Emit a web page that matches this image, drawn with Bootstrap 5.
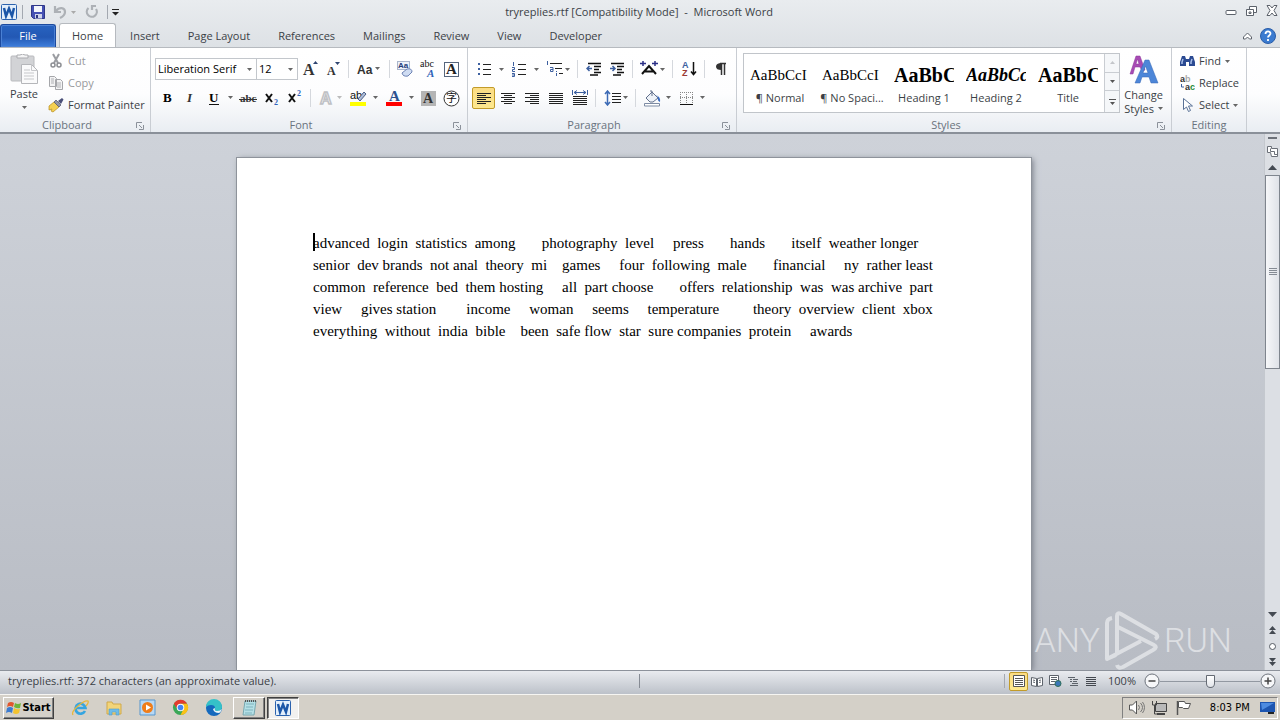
<!DOCTYPE html>
<html lang="en">
<head>
<meta charset="utf-8">
<meta name="viewport" content="width=device-width, initial-scale=1">
<title>tryreplies.rtf [Compatibility Mode] - Microsoft Word</title>
<link href="https://cdn.jsdelivr.net/npm/bootstrap@5.3.0/dist/css/bootstrap.min.css" rel="stylesheet">
<script src="https://cdn.jsdelivr.net/npm/bootstrap@5.3.0/dist/js/bootstrap.bundle.min.js"></script>
<style>
body{font:11px/14px "Open Sans","Noto Sans",sans-serif;color:#3b3f46;background:#c5c9d0;overflow:hidden}
button{border:0;background:none;padding:0;color:inherit;font:inherit;display:inline-flex;align-items:center;justify-content:center;white-space:nowrap}
svg{display:block;flex:none}
.top-bg{background:linear-gradient(#e9ecef,#dde1e5)}
.titlebar{height:24px}
.title-side{flex:1 1 0}
.win-btns{padding:3px 2px 6px 0}
.vsep{width:1px;height:14px;background:#a3a8b0}
.tabs{height:24px;border-bottom:1px solid #b6babf}
.tabs .tab{padding:0 14px;height:23px;color:#3b3f46;text-decoration:none;display:flex;align-items:center}
.tabs .tab-file{width:56px;padding:0;justify-content:center;color:#fff;border:1px solid #1c4a9e;border-bottom:0;border-radius:3px 3px 0 0;background:linear-gradient(#2763c0,#2358b4 55%,#3f7fdc);box-shadow:inset 0 0 0 1px #4a80d4;margin-right:3px}
.tabs .tab-on{height:24px;background:#fff;border:1px solid #b6babf;border-bottom:0;border-radius:3px 3px 0 0;padding:0 12px;color:#3b3f46}
.ribbon{height:86px;background:linear-gradient(#fff,#fdfdfe 55%,#e9edf2);border-bottom:2px solid #8a9099}
.rgroup{border-right:1px solid #c9cdd3;padding:2px 4px 0;display:flex;flex-direction:column}
.rbody{height:67px}
.rlabel{height:16px;line-height:18px;text-align:center;color:#6a737e;position:relative}
.rlabel svg{position:absolute;right:2px;bottom:2px}
.g-clip{width:151px}.g-font{width:317px}.g-para{width:269px}.g-style{width:435px}.g-edit{width:75px}
.trow{height:22px}
.tstack{padding-top:8px;gap:7px}
.tb{width:23px;height:22px}
.tsplit{width:35px;height:22px;justify-content:space-between;padding:0 3px}
.tdrop{width:31px;height:22px;gap:1px}
.tsep{width:9px;height:18px;background:linear-gradient(#d5d8dd,#d5d8dd) center/1px 100% no-repeat}
.tb-on{background:linear-gradient(#fbdc84,#fde88e);border:1px solid #c29b29;border-radius:2px}
.aligns{gap:1px}
.combo{appearance:none;border:1px solid #c3c7cc;border-radius:0;height:22px;padding:0 2px;font:inherit;color:#000;background:#fff url("data:image/svg+xml,%3Csvg xmlns='http://www.w3.org/2000/svg' width='5' height='3'%3E%3Cpath d='M0 0h5L2.5 3z' fill='%23666'/%3E%3C/svg%3E") no-repeat right 4px center}
.combo-name{width:102px}.combo-size{width:42px;margin-left:-1px}
.line-btn{height:22px;justify-content:flex-start;gap:4px}
.paste{gap:1px}
.dim{color:#98999c}
.gallery{width:377px;height:60px;border:1px solid #c1c5ca;background:#fff;margin:3px 0 0 2px}
.gal-item{width:72px;height:58px;flex-direction:column;gap:5px;padding-top:3px}
.gal-item .sample{width:60px;overflow:hidden;text-align:left;font:15px/22px "Liberation Serif",serif;color:#000}
.gal-item .sample-b{font-size:20px;font-weight:bold}
.gal-item .sample-i{font-size:18px;font-weight:bold;font-style:italic}
.gal-scroll{width:15px;border-left:1px solid #c9cdd2}
.gal-scroll button{border-bottom:1px solid #c9cdd2;background:#f5f7f9}
.gal-scroll button:last-child{border-bottom:0}
.workspace{background:linear-gradient(#ced2d9,#b8bcc4);min-height:0}
.sheet{width:794px;margin:24px 0 0 4px;background:#fff;box-shadow:0 0 0 1px #8e939b,2px 1px 6px #777c86;padding:74px 76px}
.sheet p{font:15px/22px "Liberation Serif",serif;color:#000;white-space:pre;margin:0}
.caret{display:inline-block;width:2px;height:18px;background:#000;margin-right:-2px;vertical-align:-3px}
.vscroll{width:16px;background:#dcdfe4;border-left:1px solid #c4c8ce}
.vscroll button{width:15px;height:16px;flex:none}
.vscroll .split{height:9px}
.vthumb{height:45%;border:1px solid #7f858e;background:linear-gradient(90deg,#f6f7f9,#dfe2e8);display:flex;align-items:center;justify-content:center}
.watermark{position:absolute;right:48px;bottom:0;color:#e6e8eb;opacity:.8;font:300 34px/60px Roboto,"Liberation Sans",sans-serif;gap:4px}
.status{height:24px;border-top:1px solid #8d929b;background:linear-gradient(#e9ebef,#bcc1c9);padding-bottom:3px}
.status-l{width:50%;padding-left:8px;border-right:1px solid #868b94;margin-right:-1px}
.vbtn{width:18px;height:20px}
.vbtn.tb-on{width:19px;height:19px}
.zoomer{width:100px;height:16px;appearance:none;background:linear-gradient(#9298a1,#9298a1) center/100% 1px no-repeat;margin:0}
.zoomer::-webkit-slider-thumb{appearance:none;width:9px;height:13px;background:linear-gradient(#fff,#e2e5ea);border:1px solid #646a73;border-radius:1px 1px 5px 5px}
.taskbar{height:26px;background:#d4d0c8;border-top:1px solid #f6f5f2;font:11px/14px "DejaVu Sans Condensed","Open Sans",sans-serif;color:#000;padding:0 2px 0 3px}
.raised{border:1px solid;border-color:#fff #404040 #404040 #fff;box-shadow:inset -1px -1px #808080;height:22px}
.pressed{border:1px solid;border-color:#404040 #fff #fff #404040;box-shadow:inset 1px 1px #808080;background:#f2f1ef;height:22px}
.start{width:51px;font-weight:bold;font-size:11px;gap:1px}
.task{width:32px;margin-right:2px}
.quick{gap:16px;padding:0 10px 0 17px}
.tray{width:156px;height:22px;border:1px solid;border-color:#808080 #fff #fff #808080;padding:0 1px 0 5px}
</style>
</head>
<body class="vh-100 d-flex flex-column">
<header class="top-bg">
  <div class="titlebar d-flex align-items-center">
    <div class="title-side d-flex align-items-center gap-1">
      <svg width="18" height="16" viewBox="0 0 18 16"><rect x="1.500" y=".5" width="15" height="15" rx="1" fill="#e3effb" stroke="#2b62ae"/><path d="M4 4l2 8 3-7.500 3 7.500 2-8" fill="none" stroke="#1c57a8" stroke-width="2.500"/></svg>
      <span class="vsep"></span>
      <button class="ms-1" aria-label="Save"><svg width="14" height="14" viewBox="0 0 14 14"><path d="M.5.5h13v13h-11l-2-2z" fill="#4550b4" stroke="#2f3788"/><path d="M3 1h8v6H3z" fill="#f3f5fb"/><path d="M4 9h7v4.500H4z" fill="#cfd3ea"/><path d="M5 10h2v3H5z" fill="#2c3580"/></svg></button>
      <button class="ms-1" aria-label="Undo"><svg width="24" height="14" viewBox="0 0 24 14"><path d="M2 1v6h6M3 6c3-4 9-4 9 1 0 3-3 5-5 6" fill="none" stroke="#adb1b6" stroke-width="2.200"/><path d="M18 6h5l-2.500 3z" fill="#aaa"/></svg></button>
      <button class="ms-1" aria-label="Repeat"><svg width="14" height="14" viewBox="0 0 14 14"><path d="M3.500 3a5 5 0 1 0 7.500 1M11 1H7v4" fill="none" stroke="#adb1b6" stroke-width="2.200"/></svg></button>
      <span class="vsep ms-1"></span>
      <button aria-label="Customize toolbar"><svg width="7" height="7" viewBox="0 0 7 7"><path d="M0 0h7v1H0zM0 3h7L3.500 6.500z" fill="#222"/></svg></button>
    </div>
    <div>tryreplies.rtf [Compatibility Mode] &nbsp;-&nbsp; Microsoft Word</div>
    <div class="title-side win-btns d-flex align-items-center justify-content-end gap-1">
      <button class="me-1" aria-label="Minimize"><svg width="12" height="12" viewBox="0 0 12 12"><rect x="1" y="5.500" width="10" height="4" rx="1" fill="#fff" stroke="#5c626b"/></svg></button>
      <button class="me-1" aria-label="Restore"><svg width="13" height="12" viewBox="0 0 13 12"><path d="M4.500 1.500h7v6h-7z" fill="#fff" stroke="#5c626b"/><path d="M1.500 4.500h7v6h-7z" fill="#fff" stroke="#5c626b"/><path d="M4 7h2v1.500H4z" fill="none" stroke="#5c626b"/></svg></button>
      <button aria-label="Close"><svg width="12" height="11" viewBox="0 0 12 11"><path d="M1 .5h3l2 2.500 2-2.500h3L8 5.500l3 5H8L6 8l-2 2.500H1l3-5z" fill="#fff" stroke="#5c626b"/></svg></button>
    </div>
  </div>
  <nav class="tabs d-flex align-items-end" aria-label="Ribbon tabs">
    <a href="#" class="tab tab-file">File</a><a href="#" class="tab tab-on">Home</a><a href="#" class="tab">Insert</a><a href="#" class="tab">Page Layout</a><a href="#" class="tab">References</a><a href="#" class="tab">Mailings</a><a href="#" class="tab">Review</a><a href="#" class="tab">View</a><a href="#" class="tab">Developer</a>
    <div class="ms-auto d-flex align-items-center align-self-center gap-2 pe-1">
      <button aria-label="Minimize ribbon"><svg width="9" height="8" viewBox="0 0 9 8"><path d="M.5 5l4-4 4 4v2h-2l-2-2-2 2h-2z" fill="#fff" stroke="#5c626b"/></svg></button>
      <button aria-label="Help"><svg width="16" height="16" viewBox="0 0 16 16"><circle cx="8" cy="8" r="7.500" fill="#3b7bd0" stroke="#2a5da8"/><path d="M5.500 6c0-3.500 5-3.300 5-.4C10.500 7.500 8 7.500 8 9.500M8 11v2" stroke="#fff" stroke-width="1.800" fill="none"/></svg></button>
    </div>
  </nav>
</header>

<section class="ribbon d-flex" aria-label="Home ribbon">
  <div class="rgroup g-clip">
    <div class="rbody d-flex">
      <button class="paste flex-column px-1 me-1 justify-content-start pt-1">
        <svg width="32" height="32" viewBox="0 0 32 32"><rect x="3" y="2" width="23" height="25" rx="1" fill="#d2d3d6" stroke="#b9babe"/><path d="M9 4V1h3q2.500-2 5 0h3v3z" fill="#f4f4f5" stroke="#aaabaf"/><path d="M13.500 10.500h10l6 6v13h-16z" fill="#fafafb" stroke="#b5b6ba"/><path d="M23.500 10.500v6h6M16 16h6M16 19h10M16 22h10M16 25h10" fill="none" stroke="#c6c7ca"/></svg>
        Paste
        <svg width="5" height="9" viewBox="0 0 5 9"><path d="M0 4h5L2.500 7z" fill="#666"/></svg>
      </button>
      <div class="d-flex flex-column align-items-start">
        <button class="line-btn dim"><svg width="16" height="16" viewBox="0 0 16 16"><path d="M5 1l5 9M11 1l-5 9" stroke="#9b9da2" stroke-width="2"/><circle cx="5" cy="12" r="2" fill="none" stroke="#8c8e93" stroke-width="1.500"/><circle cx="11" cy="12" r="2" fill="none" stroke="#8c8e93" stroke-width="1.500"/></svg>Cut</button>
        <button class="line-btn dim"><svg width="16" height="16" viewBox="0 0 16 16"><path d="M1.500 1.500h5l2 2v8h-7zM7.500 4.500h5l2 2v8h-7z" fill="#f3f3f4" stroke="#a5a6aa"/><path d="M3 4h3M3 6h3M3 8h3M9 8h4M9 10h4M9 12h4" stroke="#b0b1b5"/></svg>Copy</button>
        <button class="line-btn"><svg width="16" height="16" viewBox="0 0 16 16"><path d="M1 9l5-4 5 5-6 5-2-1 1-2-3 1z" fill="#f3cf52" stroke="#b78d1d" stroke-width=".7"/><path d="M6 5l2-2 5 5-2 2z" fill="#8f93a6" stroke="#4e5268" stroke-width=".7"/><path d="M10 4l4-3 1.500 1.500L13 7z" fill="#4a4f78"/></svg>Format Painter</button>
      </div>
    </div>
    <div class="rlabel pe-3">Clipboard<svg width="8" height="8" viewBox="0 0 8 8"><path d="M.5 6V.5H6M3 3l3 3M7.500 3v4.500H3" fill="none" stroke="#8b919a"/></svg></div>
  </div>

  <div class="rgroup g-font">
    <div class="rbody tstack d-flex flex-column">
      <div class="trow d-flex align-items-center justify-content-between">
        <div class="d-flex"><select class="combo combo-name" aria-label="Font"><option>Liberation Serif</option></select><select class="combo combo-size" aria-label="Font size"><option>12</option></select></div>
        <div class="d-flex align-items-center"><button class="tb" aria-label="Grow font"><svg width="18" height="18" viewBox="0 0 18 18"><text x="2" y="15" font-family="Liberation Serif" font-weight="bold" font-size="16" fill="#333">A</text><path d="M12 4h5l-2.500-3z" fill="#2d4470"/></svg></button>
        <button class="tb" aria-label="Shrink font"><svg width="18" height="18" viewBox="0 0 18 18"><text x="3" y="15" font-family="Liberation Serif" font-weight="bold" font-size="12" fill="#333">A</text><path d="M11 2h5l-2.500 3z" fill="#2d4470"/></svg></button></div>
        <span class="tsep"></span>
        <button class="tdrop" aria-label="Change case"><svg width="25" height="16" viewBox="0 0 25 16"><text x="1" y="13" font-family="Liberation Sans" font-weight="bold" font-size="12" fill="#333">Aa</text><path d="M19 6h5l-2.500 3z" fill="#666"/></svg></button>
        <span class="tsep"></span>
        <button class="tb" aria-label="Clear formatting"><svg width="18" height="18" viewBox="0 0 18 18"><rect x="1.500" y="1.500" width="12" height="8" fill="#eef2fa" stroke="#aab6cc"/><text x="2" y="8" font-family="Liberation Sans" font-weight="bold" font-size="8" fill="#223a78">Aa</text><path d="M6 13l5-4q5-1 5 3l-4 4q-5 1-6-3z" fill="#cfdcf2" stroke="#6d83b4"/></svg></button>
        <button class="tb" aria-label="Phonetic guide"><svg width="18" height="20" viewBox="0 0 18 20"><text x="1" y="8" font-family="Liberation Serif" font-size="10" fill="#111">abc</text><text x="8" y="18" font-family="Liberation Serif" font-style="italic" font-weight="bold" font-size="11" fill="#2e62b8">A</text></svg></button>
        <button class="tb" aria-label="Character border"><svg width="17" height="17" viewBox="0 0 17 17"><rect x="1.500" y="1.500" width="14" height="14" fill="#fff" stroke="#56657c"/><text x="3" y="13" font-family="Liberation Serif" font-weight="bold" font-size="15" fill="#222">A</text></svg></button>
      </div>
      <div class="trow d-flex align-items-center justify-content-between">
        <button class="tb" aria-label="Bold"><svg width="12" height="14" viewBox="0 0 12 14"><text x="2" y="11" font-family="Liberation Serif" font-weight="bold" font-size="13">B</text></svg></button>
        <button class="tb" aria-label="Italic"><svg width="12" height="14" viewBox="0 0 12 14"><text x="3" y="11" font-family="Liberation Serif" font-style="italic" font-weight="bold" font-size="13" fill="#333">I</text></svg></button>
        <button class="tsplit" aria-label="Underline"><svg width="29" height="16" viewBox="0 0 29 16"><text x="5" y="12" font-family="Liberation Serif" font-weight="bold" font-size="13">U</text><path d="M5 14.500h10" stroke="#111"/><path d="M24 6h5l-2.500 3z" fill="#666"/></svg></button>
        <button class="tb" aria-label="Strikethrough"><svg width="18" height="14" viewBox="0 0 18 14"><text x="1" y="11" font-family="Liberation Serif" font-weight="bold" font-size="11" fill="#333">abc</text><path d="M0 8.500h18" stroke="#333"/></svg></button>
        <button class="tb" aria-label="Subscript"><svg width="16" height="16" viewBox="0 0 16 16"><path d="M3 4l6 8M9 4l-6 8" stroke="#111" stroke-width="2"/><text x="11" y="15" font-family="Liberation Serif" font-weight="bold" font-size="8" fill="#2e62b8">2</text></svg></button>
        <button class="tb" aria-label="Superscript"><svg width="16" height="16" viewBox="0 0 16 16"><path d="M3 4l6 8M9 4l-6 8" stroke="#111" stroke-width="2"/><text x="11" y="6" font-family="Liberation Serif" font-weight="bold" font-size="8" fill="#2e62b8">2</text></svg></button>
        <span class="tsep"></span>
        <button class="tdrop" aria-label="Text effects"><svg width="25" height="18" viewBox="0 0 25 18"><text x="2" y="15" font-family="Liberation Sans" font-weight="bold" font-size="16" fill="#fff" stroke="#bfc1c5" stroke-width="1.500">A</text><path d="M19 7h5l-2.500 3z" fill="#bbb"/></svg></button>
        <button class="tsplit" aria-label="Highlight"><svg width="29" height="18" viewBox="0 0 29 18"><text x="1" y="10" font-family="Liberation Sans" font-size="11" fill="#111">ab</text><path d="M9 10l6-7 2 2-6 7z" fill="#aebdd8" stroke="#4d5f86"/><path d="M1 13h16v4H1z" fill="#ff0"/><path d="M24 7h5l-2.500 3z" fill="#666"/></svg></button>
        <button class="tsplit" aria-label="Font color"><svg width="29" height="18" viewBox="0 0 29 18"><text x="4" y="12" font-family="Liberation Serif" font-weight="bold" font-size="15" fill="#2d528f">A</text><path d="M1 13h16v4H1z" fill="#f00"/><path d="M24 7h5l-2.500 3z" fill="#666"/></svg></button>
        <button class="tb" aria-label="Character shading"><svg width="15" height="15" viewBox="0 0 15 15"><path d="M0 0h15v15H0z" fill="#b5b5b5"/><text x="2" y="12" font-family="Liberation Serif" font-weight="bold" font-size="14" fill="#333">A</text></svg></button>
        <button class="tb" aria-label="Enclose characters"><svg width="17" height="17" viewBox="0 0 17 17"><circle cx="8.500" cy="8.500" r="7.500" fill="#fff" stroke="#333"/><text x="3" y="12" font-family="Noto Sans CJK SC" font-size="11" fill="#111">字</text></svg></button>
      </div>
    </div>
    <div class="rlabel pe-3">Font<svg width="8" height="8" viewBox="0 0 8 8"><path d="M.5 6V.5H6M3 3l3 3M7.500 3v4.500H3" fill="none" stroke="#8b919a"/></svg></div>
  </div>

  <div class="rgroup g-para">
    <div class="rbody tstack d-flex flex-column">
      <div class="trow d-flex align-items-center">
        <button class="tsplit" aria-label="Bullets"><svg width="29" height="16" viewBox="0 0 29 16"><path d="M3 3h2M3 8h2M3 13h2" stroke="#3c5f9f" stroke-width="2"/><path d="M8 3.500h8M8 8.500h8M8 13.500h8" stroke="#222"/><path d="M24 7h5l-2.500 3z" fill="#666"/></svg></button>
        <button class="tsplit" aria-label="Numbering"><svg width="29" height="16" viewBox="0 0 29 16"><path d="M3.500 1v4M2 6.500h2.500v2h-2v2H5M2 12.500h2.500v3H2M2 14h2" stroke="#3c5f9f" fill="none"/><path d="M8 3.500h8M8 8.500h8M8 13.500h8" stroke="#222"/><path d="M24 7h5l-2.500 3z" fill="#666"/></svg></button>
        <button class="tdrop" aria-label="Multilevel list"><svg width="26" height="16" viewBox="0 0 26 16"><path d="M2.500 0v4M5 6.500h3v4H5.500v-2H8M11.500 12v3M11.500 10v1" stroke="#3c5f9f" fill="none"/><path d="M5 2.500h12M10 7.500h7M14 12.500h4" stroke="#222"/><path d="M20 7h5l-2.500 3z" fill="#666"/></svg></button>
        <span class="tsep"></span>
        <button class="tb" aria-label="Decrease indent"><svg width="16" height="14" viewBox="0 0 16 14"><path d="M2 1.500h13M8 4.500h7M8 7.500h5M8 10.500h7M4 13h8" stroke="#111" stroke-width="1.500"/><path d="M6 6.500H1M3.500 4L1 6.500 3.500 9" stroke="#3c5f9f" fill="none" stroke-width="1.500"/></svg></button>
        <button class="tb" aria-label="Increase indent"><svg width="16" height="14" viewBox="0 0 16 14"><path d="M2 1.500h13M8 4.500h7M8 7.500h5M8 10.500h7M4 13h8" stroke="#111" stroke-width="1.500"/><path d="M1 6.500h5M3.500 4L6 6.500 3.500 9" stroke="#3c5f9f" fill="none" stroke-width="1.500"/></svg></button>
        <span class="tsep"></span>
        <button class="tdrop" aria-label="Asian layout"><svg width="26" height="16" viewBox="0 0 26 16"><path d="M2 13l7-8 7 8M5 10.500h8" stroke="#111" stroke-width="2" fill="none"/><path d="M0 2.500h6M3 0v5M18 2.500h-6M15 0v5" stroke="#2b2f86" stroke-width="1.500" fill="none"/><path d="M20 7h5l-2.500 3z" fill="#666"/></svg></button>
        <span class="tsep"></span>
        <button class="tb" aria-label="Sort"><svg width="16" height="18" viewBox="0 0 16 18"><text x="1" y="8" font-family="Liberation Sans" font-weight="bold" font-size="9" fill="#3c5f9f">A</text><text x="1" y="16" font-family="Liberation Sans" font-weight="bold" font-size="9" fill="#9b3a34">Z</text><path d="M12.500 2v12M10 11.500l2.500 3 2.500-3" stroke="#111" fill="none" stroke-width="1.500"/></svg></button>
        <span class="tsep"></span>
        <button class="tb" aria-label="Show paragraph marks"><svg width="12" height="14" viewBox="0 0 12 14"><path d="M6.500 1v12M9.500 1v12M11 1.500H5" stroke="#333" stroke-width="1.500"/><path d="M6.500 1Q1 1 1 4.500T6.500 8z" fill="#333"/></svg></button>
      </div>
      <div class="trow d-flex align-items-center">
        <div class="aligns d-flex">
        <button class="tb tb-on" aria-label="Align left"><svg width="14" height="13" viewBox="0 0 14 13"><path d="M0 1.500h14M0 3.500h9M0 5.500h14M0 7.500h9M0 9.500h14M0 11.500h9" stroke="#222"/></svg></button>
        <button class="tb" aria-label="Center"><svg width="14" height="13" viewBox="0 0 14 13"><path d="M0 1.500h14M3 3.500h8M0 5.500h14M3 7.500h8M0 9.500h14M3 11.500h8" stroke="#222"/></svg></button>
        <button class="tb" aria-label="Align right"><svg width="14" height="13" viewBox="0 0 14 13"><path d="M0 1.500h14M5 3.500h9M0 5.500h14M5 7.500h9M0 9.500h14M5 11.500h9" stroke="#222"/></svg></button>
        <button class="tb" aria-label="Justify"><svg width="14" height="13" viewBox="0 0 14 13"><path d="M0 1.500h14M0 3.500h14M0 5.500h14M0 7.500h14M0 9.500h14M0 11.500h14" stroke="#222"/></svg></button>
        <button class="tb" aria-label="Distribute"><svg width="16" height="16" viewBox="0 0 16 16"><path d="M.5 0v5M15.500 0v5M2 2.500h12M5 .5l-3 2 3 2M11 .5l3 2-3 2" stroke="#3c5f9f" fill="none"/><path d="M1 6.500h14M1 8.500h14M1 10.500h14M1 12.500h14M1 14.500h14" stroke="#222"/></svg></button>
        </div>
        <span class="tsep"></span>
        <button class="tdrop" aria-label="Line spacing"><svg width="26" height="16" viewBox="0 0 26 16"><path d="M4.500 1v14M2 4l2.500-3L7 4M2 12l2.500 3L7 12" stroke="#3c6ab5" fill="none" stroke-width="1.500"/><path d="M9 3.500h9M9 6.500h9M9 9.500h9M9 12.500h9" stroke="#222"/><path d="M20 6h5l-2.500 3z" fill="#666"/></svg></button>
        <span class="tsep"></span>
        <button class="tsplit" aria-label="Shading"><svg width="29" height="17" viewBox="0 0 29 17"><path d="M3 8l6-6 6 6-5 4H7z" fill="#eef2f8" stroke="#62708c"/><path d="M9 6V1H7" stroke="#62708c" fill="none"/><path d="M13 5q5 2 4 7-3-1-2-5z" fill="#3a6cc4"/><path d="M1.500 13.500h15v2.500h-15z" fill="#fff" stroke="#7d8ba3"/><path d="M23 6h5l-2.500 3z" fill="#666"/></svg></button>
        <button class="tsplit" aria-label="Borders"><svg width="29" height="16" viewBox="0 0 29 16"><path d="M2.500 2v11M8.500 2v11M14.500 2v11M2 2.500h13M2 7.500h13" stroke="#888" stroke-dasharray="1 1"/><path d="M2 14.500h13" stroke="#111"/><path d="M22 6h5l-2.500 3z" fill="#666"/></svg></button>
      </div>
    </div>
    <div class="rlabel pe-3">Paragraph<svg width="8" height="8" viewBox="0 0 8 8"><path d="M.5 6V.5H6M3 3l3 3M7.500 3v4.500H3" fill="none" stroke="#8b919a"/></svg></div>
  </div>

  <div class="rgroup g-style">
    <div class="rbody d-flex justify-content-between">
      <div class="gallery d-flex justify-content-between">
        <div class="d-flex">
        <button class="gal-item"><span class="sample">AaBbCcI</span>¶ Normal</button><button class="gal-item"><span class="sample">AaBbCcI</span>¶ No Spaci...</button><button class="gal-item"><span class="sample sample-b">AaBbC</span>Heading 1</button><button class="gal-item"><span class="sample sample-i">AaBbCc</span>Heading 2</button><button class="gal-item"><span class="sample sample-b">AaBbC</span>Title</button>
        </div>
        <div class="gal-scroll d-flex flex-column">
          <button class="flex-fill" aria-label="Previous styles"><svg width="5" height="3" viewBox="0 0 5 3"><path d="M0 3h5L2.500 0z" fill="#c4c6ca"/></svg></button>
          <button class="flex-fill" aria-label="Next styles"><svg width="5" height="3" viewBox="0 0 5 3"><path d="M0 0h5L2.500 3z" fill="#555"/></svg></button>
          <button class="flex-fill" aria-label="More styles"><svg width="7" height="6" viewBox="0 0 7 6"><path d="M0 0h7v1H0zM1 3h5L3.500 6z" fill="#555"/></svg></button>
        </div>
      </div>
      <button class="flex-column justify-content-start pt-1 px-1">
        <svg width="32" height="34" viewBox="0 0 32 34"><path d="M2 20L8 2h4l5 14-3 1-2-4H7l-2 7zM8 10h3L9.500 5z" fill="#a74bb4" stroke="#8a3598" stroke-width=".5"/><path d="M7 29L17 6h4l9 23h-7l-2-6h-7l-2 6zM15 19h5l-2.500-7z" fill="#4d86d8" stroke="#3467b5" stroke-width=".5"/></svg>
        <span class="lh-sm">Change<br>Styles<svg class="d-inline ms-1" width="5" height="5" viewBox="0 0 5 5"><path d="M0 0h5L2.500 3z" fill="#666"/></svg></span>
      </button>
    </div>
    <div class="rlabel pe-3">Styles<svg width="8" height="8" viewBox="0 0 8 8"><path d="M.5 6V.5H6M3 3l3 3M7.500 3v4.500H3" fill="none" stroke="#8b919a"/></svg></div>
  </div>

  <div class="rgroup g-edit">
    <div class="rbody d-flex flex-column align-items-start ps-1">
      <button class="line-btn"><svg width="15" height="14" viewBox="0 0 15 14"><path d="M0 12V8l2-6h3l1 3h3l1-3h3l2 6v4H9V8H6v4z" fill="#2b4a92"/><path d="M2 10V8l1-3M11 10V8l1-3" stroke="#a9bfe8" fill="none" stroke-width="1.500"/></svg>Find<svg width="5" height="3" viewBox="0 0 5 3"><path d="M0 0h5L2.500 3z" fill="#666"/></svg></button>
      <button class="line-btn"><svg width="15" height="16" viewBox="0 0 15 16"><text x="0" y="7" font-family="Liberation Sans" font-weight="bold" font-size="9" fill="#333">a<tspan fill="#aaa">b</tspan></text><text x="5" y="15" font-family="Liberation Sans" font-weight="bold" font-size="9" fill="#333">a<tspan fill="#1f8a36">c</tspan></text><path d="M1.500 9v3H4" stroke="#3c5f9f" fill="none"/></svg>Replace</button>
      <button class="line-btn"><svg width="15" height="16" viewBox="0 0 15 16"><path d="M3.500 1.500v11l3-2.500 2 4.500 2-1-2-4.500h4z" fill="#fff" stroke="#5a7297"/></svg>Select<svg width="5" height="3" viewBox="0 0 5 3"><path d="M0 0h5L2.500 3z" fill="#666"/></svg></button>
    </div>
    <div class="rlabel">Editing</div>
  </div>
</section>

<main class="workspace flex-grow-1 d-flex position-relative">
  <div class="flex-grow-1 d-flex justify-content-center overflow-hidden">
    <article class="sheet"><p><span class="caret"></span>advanced  login  statistics  among       photography  level     press       hands       itself  weather longer
senior  dev brands  not anal  theory  mi    games     four  following  male       financial     ny  rather least
common  reference  bed  them hosting     all  part choose       offers  relationship  was  was archive  part
view     gives station        income     woman     seems     temperature         theory  overview  client  xbox
everything  without  india  bible    been  safe flow  star  sure companies  protein     awards</p></article>
  </div>
  <div class="watermark d-flex align-items-center">ANY<svg width="56" height="60" viewBox="0 0 56 60"><path d="M8 8Q3 9 3 13v36l9-4M13 44V6q0-4 4-2l35 20q3 3-1 5M14 17l36 18q4 2-1 5L19 57q-5 2-6-2M3 49L37 31" fill="none" stroke="#e6e8eb" stroke-width="4" stroke-linejoin="round"/></svg>RUN</div>
  <div class="vscroll d-flex flex-column align-items-center">
    <button class="split" aria-label="Split"><svg width="9" height="3" viewBox="0 0 9 3"><path d="M0 0h9v2H0z" fill="#6b7078"/></svg></button>
    <button aria-label="Ruler"><svg width="13" height="13" viewBox="0 0 13 13"><path d="M1.500 1.500h4v2h6v8h-6l-1-4h-3z" fill="#fff" stroke="#6b7078"/><path d="M4.500 3.500v3h4v3h3" stroke="#6b7078" fill="none"/></svg></button>
    <button aria-label="Scroll up"><svg width="9" height="5" viewBox="0 0 9 5"><path d="M0 5h9L4.500 0z" fill="#444a52"/></svg></button>
    <div class="flex-grow-1 w-100"><div class="vthumb"><svg width="8" height="8" viewBox="0 0 8 8"><path d="M0 .5h8M0 2.500h8M0 4.500h8M0 6.500h8" stroke="#858b94"/></svg></div></div>
    <button aria-label="Scroll down"><svg width="9" height="5" viewBox="0 0 9 5"><path d="M0 0h9L4.500 5z" fill="#444a52"/></svg></button>
    <button aria-label="Previous page"><svg width="7" height="8" viewBox="0 0 7 8"><path d="M0 4h7L3.500 0zM0 8h7L3.500 4z" fill="#444a52"/></svg></button>
    <button aria-label="Browse object"><svg width="7" height="7" viewBox="0 0 7 7"><circle cx="3.500" cy="3.500" r="3" fill="#fff" stroke="#555b63"/></svg></button>
    <button aria-label="Next page"><svg width="7" height="8" viewBox="0 0 7 8"><path d="M0 0h7L3.500 4zM0 4h7L3.500 8z" fill="#444a52"/></svg></button>
  </div>
</main>

<div class="status d-flex align-items-center">
  <div class="status-l">tryreplies.rtf: 372 characters (an approximate value).</div>
  <div class="ms-auto d-flex align-items-center">
    <span class="vsep me-1"></span>
    <button class="vbtn tb-on" aria-label="Print layout"><svg width="12" height="12" viewBox="0 0 12 12"><path d="M.5.5h11v11H.5z" fill="#fff" stroke="#555"/><path d="M2 3.500h8M2 5.500h8M2 7.500h8M2 9.500h8" stroke="#555"/></svg></button>
    <button class="vbtn" aria-label="Full screen reading"><svg width="12" height="11" viewBox="0 0 12 11"><path d="M.5 1.500l5 1v8l-5-1zM11.500 1.500l-5 1v8l5-1z" fill="#fff" stroke="#5d636b"/><path d="M2 4l2 .5M2 6l2 .5M10 4l-2 .5M10 6l-2 .5" stroke="#5d636b"/></svg></button>
    <button class="vbtn" aria-label="Web layout"><svg width="13" height="12" viewBox="0 0 13 12"><path d="M.5.5h9v9h-9z" fill="#fff" stroke="#5d636b"/><path d="M2 2.500h6M2 4.500h6M2 6.500h4" stroke="#5d636b"/><circle cx="9" cy="8.500" r="3" fill="#3b76b8" stroke="#2d6d55"/></svg></button>
    <button class="vbtn" aria-label="Outline"><svg width="10" height="9" viewBox="0 0 10 9"><path d="M0 .5h7M2 2.500h2M5 2.500h5M2 4.500h2M5 4.500h4M4 6.500h6M2 8.500h8" stroke="#5d636b"/></svg></button>
    <button class="vbtn" aria-label="Draft"><svg width="10" height="9" viewBox="0 0 10 9"><path d="M0 .5h10M0 2.500h10M0 4.500h10M0 6.500h10M0 8.500h10" stroke="#44484f"/></svg></button>
    <button class="ps-2 pe-2 me-0">100%</button>
    <button aria-label="Zoom out"><svg width="16" height="16" viewBox="0 0 16 16"><circle cx="8" cy="8" r="7" fill="#f6f7f9" stroke="#6e747d"/><path d="M4.500 8h7" stroke="#444" stroke-width="1.500"/></svg></button>
    <input class="zoomer" type="range" min="0" max="100" value="50" aria-label="Zoom">
    <button class="me-1" aria-label="Zoom in"><svg width="16" height="16" viewBox="0 0 16 16"><circle cx="8" cy="8" r="7" fill="#f6f7f9" stroke="#6e747d"/><path d="M4.500 8h7M8 4.500v7" stroke="#444" stroke-width="1.500"/></svg></button>
  </div>
</div>

<footer class="taskbar d-flex align-items-center">
  <button class="raised start"><svg width="15" height="14" viewBox="0 0 15 14"><path d="M2 2q3-2 6 0L7 6Q4 4 1 6z" fill="#e2562d"/><path d="M9 2q3 2 6 0l-1 5q-3 1-6-1z" fill="#6fb53a"/><path d="M1 7q3-2 6 0l-1 5Q3 10 0 12z" fill="#3b7bd0"/><path d="M8 7q3 2 6 1l-1 4q-3 2-6 0z" fill="#f3c32f"/></svg>Start</button>
  <div class="quick d-flex align-items-center">
    <button aria-label="Internet Explorer"><svg width="18" height="18" viewBox="0 0 18 18"><path d="M14 12a5 5 0 1 1 .5-3H5" fill="none" stroke="#36a5e0" stroke-width="2.600"/><path d="M2 16Q0 13 7 7t10-5q1 2-2 5" fill="none" stroke="#e8b73a" stroke-width="1.300"/></svg></button>
    <button aria-label="Explorer"><svg width="18" height="18" viewBox="0 0 18 18"><path d="M2 3h5l1 2h8v10H2z" fill="#f2d479" stroke="#d0a94a"/><path d="M4 16v-6h10v6h-3v-3H7v3z" fill="#6fbce8" stroke="#4d9bcb" stroke-width=".6"/></svg></button>
    <button aria-label="Media Player"><svg width="17" height="17" viewBox="0 0 17 17"><path d="M1 1h15v15H1z" fill="#b8d8f4" stroke="#5697cf"/><circle cx="8.500" cy="8.500" r="5.500" fill="#ef7d1a"/><path d="M7 5.500v6l5-3z" fill="#fff"/></svg></button>
    <button aria-label="Chrome"><svg width="17" height="17" viewBox="0 0 18 18"><circle cx="9" cy="9" r="8" fill="#3aa757"/><path d="M2 5a8 8 0 0 1 14 0H9L6 11z" fill="#e33b2e"/><path d="M16 5a8 8 0 0 1-7 12l4-8-3-4z" fill="#fbc116"/><circle cx="9" cy="9" r="4" fill="#fff"/><circle cx="9" cy="9" r="3" fill="#4285f4"/></svg></button>
    <button aria-label="Edge"><svg width="18" height="18" viewBox="0 0 18 18"><circle cx="9" cy="9" r="8" fill="#1469bd"/><path d="M1 8a8 8 0 0 1 16 0q0 4-5 4-3 0-2-3 0-3-4-3-3 0-5 2z" fill="#35c1c8"/><path d="M10 9q-1 3 2 3 3 0 5-2-1 3-3 4-5 0-6-4z" fill="#e9f6fa"/></svg></button>
  </div>
  <button class="raised task" aria-label="Notepad"><svg width="17" height="18" viewBox="0 0 17 18"><path d="M4 2h11l-2 14H2z" fill="#b5e0e6" stroke="#78a8b0"/><path d="M5 5h8M5 8h7M4 11h8M4 14h7" stroke="#7fb3bd"/><path d="M4 2h11" stroke="#555" stroke-dasharray="1 1" stroke-width="2"/></svg></button>
  <button class="pressed task" aria-label="Word"><svg width="16" height="16" viewBox="0 0 16 16"><rect x=".5" y=".5" width="15" height="15" rx="1" fill="#e3effb" stroke="#2b62ae"/><path d="M3 4l2 8 3-7.500 3 7.500 2-8" fill="none" stroke="#1c57a8" stroke-width="2.500"/></svg></button>
  <div class="tray ms-auto d-flex align-items-center justify-content-between">
    <button aria-label="Volume"><svg width="17" height="15" viewBox="0 0 17 15"><path d="M1.500 5h3L8.500 1v13l-4-4h-3z" fill="#fff" stroke="#555"/><path d="M10.500 5q2 2.500 0 5M12.500 3q4 4.500 0 9M14.500 2q4 5.500 0 11" stroke="#777" fill="none"/></svg></button>
    <button aria-label="Network"><svg width="17" height="16" viewBox="0 0 17 16"><path d="M4.500 3.500h11v8h-11z" fill="#b9b9b9" stroke="#444"/><path d="M6 14h8" stroke="#444" stroke-width="2"/><path d="M1.500 1v4h4V1M3.500 5v9h4" stroke="#444" fill="none"/></svg></button>
    <button aria-label="Action Center"><svg width="17" height="15" viewBox="0 0 17 15"><path d="M2.500 1v14" stroke="#555" stroke-width="1.500"/><path d="M3.500 1.500h6l1 2h5l-2 5h-5l-1-1h-4z" fill="#fff" stroke="#555"/></svg></button>
    <span class="ps-2 pe-1 ms-1">8:03 PM</span>
    <button aria-label="Show desktop"><svg width="16" height="14" viewBox="0 0 16 14"><path d="M0 1h15v10H0z" fill="#1d55b0"/><path d="M1 2h13L2 9z" fill="#4d8be0"/><path d="M8 11h6v2H8z" fill="#222"/></svg></button>
  </div>
</footer>
</body>
</html>
